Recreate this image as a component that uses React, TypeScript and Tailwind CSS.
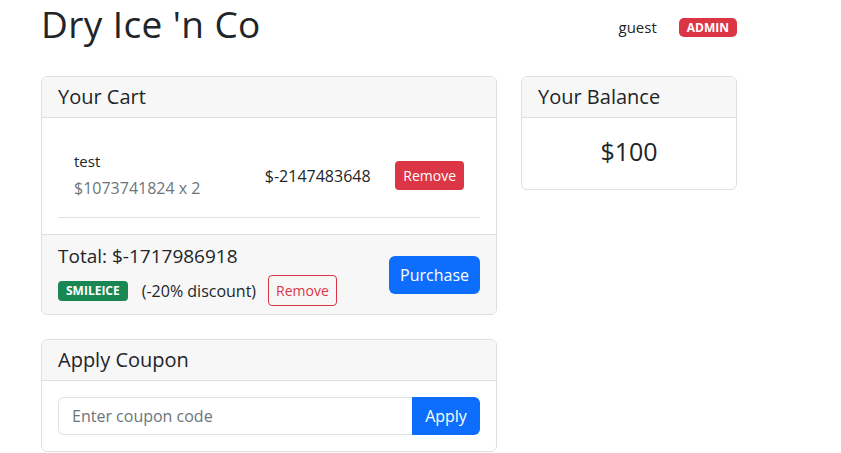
const FONT = { fontFamily: '"Open Sans", "Noto Sans CJK KR", sans-serif' };

function Card({ title, children, className = '' }: { title: string; children: React.ReactNode; className?: string }) {
  return (
    <div className={`border border-[#dfdfdf] rounded-[6px] overflow-hidden bg-white ${className}`}>
      <div className="bg-[#f7f7f7] border-b border-[#dfdfdf] px-4 py-2">
        <h5 className="text-[20px] leading-[24px] text-[#212529]">{title}</h5>
      </div>
      {children}
    </div>
  );
}

function CartItem() {
  return (
    <div className="grid grid-cols-[2fr_1fr_1fr] items-center px-4 py-4 border-b border-[#dee2e6]">
      <div>
        <div className="text-[15px] leading-[22px] text-[#212529]">test</div>
        <div className="text-[16px] leading-[26px] text-[#6c757d] mt-[3px]">$1073741824 x 2</div>
      </div>
      <div className="text-[16px] text-[#212529] pl-[4px]">$-2147483648</div>
      <div className="flex justify-end">
        <button className="bg-[#dc3545] text-white text-[14px] leading-[21px] px-[8px] py-[4px] rounded-[4px]">Remove</button>
      </div>
    </div>
  );
}

export default function App() {
  return (
    <div className="min-h-[453px] bg-white text-[#212529]" style={FONT}>
      <div className="w-[696px] ml-[41px]">
        <div className="flex justify-between items-start">
          <h1 className="text-[37px] leading-[48px] font-normal tracking-[0.4px]">Dry Ice 'n Co</h1>
          <div className="flex items-center gap-[22px] mt-[18px]">
            <span className="text-[15px] leading-[19px]">guest</span>
            <span className="bg-[#dc3545] text-white text-[12px] font-bold leading-[19px] px-[8px] rounded-[5px]">ADMIN</span>
          </div>
        </div>

        <div className="flex gap-6 mt-[28px] items-start">
          <div className="w-[456px]">
            <Card title="Your Cart">
              <div className="p-4">
                <CartItem />
              </div>
              <div className="bg-[#f7f7f7] border-t border-[#dfdfdf] px-4 py-2 flex items-center justify-between">
                <div>
                  <div className="text-[19px] leading-[27px]">Total: $-1717986918</div>
                  <div className="flex items-center mt-[5px]">
                    <span className="bg-[#198754] text-white text-[12px] font-bold leading-[20px] px-[8px] rounded-[4px]">SMILEICE</span>
                    <span className="ml-[14px] text-[16px]">(-20% discount)</span>
                    <button className="ml-[12px] border border-[#dc3545] text-[#dc3545] text-[14px] leading-[21px] px-[7px] py-[4px] rounded-[4px]">Remove</button>
                  </div>
                </div>
                <button className="bg-[#0d6efd] text-white text-[16px] leading-[24px] px-[11px] py-[7px] rounded-[6px]">Purchase</button>
              </div>
            </Card>

            <Card title="Apply Coupon" className="mt-6">
              <div className="p-4">
                <div className="flex">
                  <input
                    className="flex-1 h-[38px] border border-[#dee2e6] border-r-0 rounded-l-[6px] px-[13px] text-[16px] outline-none placeholder:text-[#6c757d]"
                    placeholder="Enter coupon code"
                    style={FONT}
                  />
                  <button className="bg-[#0d6efd] text-white text-[16px] leading-[24px] w-[68px] h-[38px] rounded-r-[6px]">Apply</button>
                </div>
              </div>
            </Card>
          </div>

          <div className="w-[216px]">
            <Card title="Your Balance">
              <div className="px-4 pt-[18px] pb-[22px] text-center">
                <h3 className="text-[25px] leading-[31px]">$100</h3>
              </div>
            </Card>
          </div>
        </div>
      </div>
    </div>
  );
}
